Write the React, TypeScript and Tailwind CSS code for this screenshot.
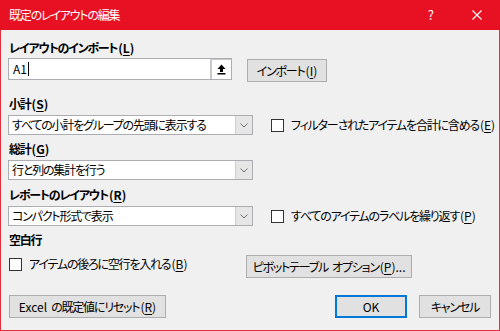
import React from "react";

const font =
  "font-['Noto_Sans_CJK_JP','Noto_Sans',sans-serif] [font-feature-settings:'palt'] tracking-[-1.2px] whitespace-nowrap";

function Key({ k }: { k: string }) {
  return (
    <span className="tracking-normal ml-px">
      (<span className="underline underline-offset-2">{k}</span>)
    </span>
  );
}

function Checkbox({ label }: { label: React.ReactNode }) {
  return (
    <div className="flex items-center">
      <div className="w-[13px] h-[13px] border border-[#333333] bg-white shrink-0" />
      <span className="ml-[7px] text-[12px] leading-[16px]">{label}</span>
    </div>
  );
}

function Select({ value }: { value: string }) {
  return (
    <div className="flex w-[245px] h-[20px] border border-[#ABADB3] bg-white shrink-0">
      <div className="flex-1 pl-[3px] text-[12px] leading-[18px] overflow-hidden">{value}</div>
      <div className="w-[17px] h-full flex items-center justify-center bg-[#E6E6E6] border-l border-[#D0D0D0]">
        <svg width="8" height="5" viewBox="0 0 8 5">
          <path d="M0.5 0.5 L4 4 L7.5 0.5" fill="none" stroke="#707070" strokeWidth="1" />
        </svg>
      </div>
    </div>
  );
}

function Button({
  children,
  className = "",
  primary = false,
}: {
  children: React.ReactNode;
  className?: string;
  primary?: boolean;
}) {
  return (
    <div
      className={`h-[23px] flex items-center justify-center bg-[#E1E1E1] text-[12px] shrink-0 ${
        primary ? "border-2 border-[#0078D7]" : "border border-[#ADADAD]"
      } ${className}`}
    >
      {children}
    </div>
  );
}

export default function App() {
  return (
    <div className={`w-[500px] h-[331px] bg-[#F0F0F0] border-x border-b border-[#E0303D] text-black flex flex-col ${font}`}>
      {/* title bar */}
      <div className="h-[30px] -mx-px bg-[#E81123] flex items-center text-white text-[12px] shrink-0">
        <span className="ml-[9px]">既定のレイアウトの編集</span>
        <span className="ml-auto mr-[38px] text-[13px] tracking-normal">?</span>
        <svg className="mr-[18px]" width="10" height="10" viewBox="0 0 10 10">
          <path d="M0.5 0.5 L9.5 9.5 M9.5 0.5 L0.5 9.5" stroke="white" strokeWidth="1.1" />
        </svg>
      </div>

      <div className="px-[7px] flex flex-col">
        <div className="mt-[10px] pl-px text-[12px] leading-[16px] font-bold">
          レイアウトのインポート<Key k="L" />
        </div>

        <div className="mt-[2px] flex items-start">
          <div className="w-[224px] h-[22px] border border-[#ABADB3] bg-white flex">
            <div className="flex-1 pl-[4px] text-[12px] leading-[20px] flex items-center tracking-normal">
              A1<span className="w-px h-[14px] bg-black ml-px" />
            </div>
            <div className="w-[21px] h-full border-l-2 border-t border-[#C8C8C8] flex items-center justify-center bg-white">
              <svg width="9" height="11" viewBox="0 0 9 11">
                <path d="M4.5 0.5 L8.5 5 L6 5 L6 8 L3 8 L3 5 L0.5 5 Z" fill="black" />
                <rect x="0.5" y="9" width="8" height="1.5" fill="black" />
              </svg>
            </div>
          </div>
          <Button className="ml-[15px] mt-px w-[80px]">
            インポート<Key k="I" />
          </Button>
        </div>

        <div className="mt-[14px] pl-px text-[12px] leading-[16px] font-bold">
          小計<Key k="S" />
        </div>
        <div className="mt-[3px] flex items-center">
          <Select value="すべての小計をグループの先頭に表示する" />
          <div className="ml-[18px]">
            <Checkbox label={<>フィルターされたアイテムを合計に含める<Key k="E" /></>} />
          </div>
        </div>

        <div className="mt-[6px] pl-px text-[12px] leading-[16px] font-bold">
          総計<Key k="G" />
        </div>
        <div className="mt-[3px] flex">
          <Select value="行と列の集計を行う" />
        </div>

        <div className="mt-[7px] pl-px text-[12px] leading-[16px] font-bold">
          レポートのレイアウト<Key k="R" />
        </div>
        <div className="mt-[3px] flex items-center">
          <Select value="コンパクト形式で表示" />
          <div className="ml-[18px]">
            <Checkbox label={<>すべてのアイテムのラベルを繰り返す<Key k="P" /></>} />
          </div>
        </div>

        <div className="mt-[6px] pl-px text-[12px] leading-[16px] font-bold">空白行</div>
        <div className="mt-[7px] flex items-start">
          <div className="pl-px mt-px">
            <Checkbox label={<>アイテムの後ろに空行を入れる<Key k="B" /></>} />
          </div>
          <Button className="ml-auto mr-[80px] w-[166px]">
            <span className="mr-[4px]">ピボットテーブル</span>オプション<Key k="P" />
            <span className="tracking-normal">...</span>
          </Button>
        </div>

        <div className="mt-[17px] flex items-center">
          <Button className="ml-px w-[157px]">
            <span className="tracking-normal mr-[4px]">Excel</span>の既定値にリセット<Key k="R" />
          </Button>
          <Button primary className="ml-auto w-[72px] tracking-normal">
            OK
          </Button>
          <Button className="ml-[12px] mr-[1px] w-[72px]">
            キャンセル
          </Button>
        </div>
      </div>
    </div>
  );
}
